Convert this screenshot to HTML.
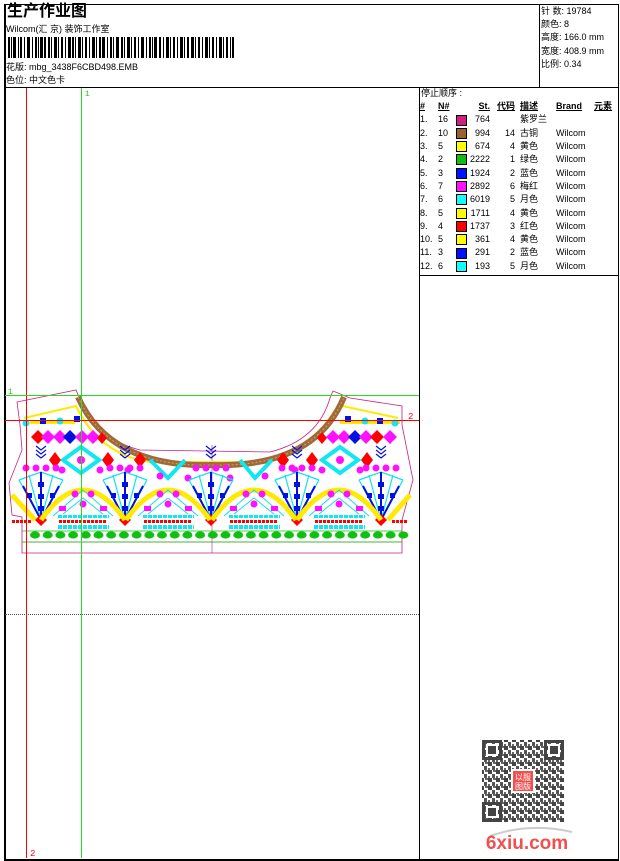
<!DOCTYPE html>
<html><head><meta charset="utf-8"><style>
*{margin:0;padding:0}
body{width:620px;height:860px;background:#fff;position:relative;overflow:hidden;font-family:"Liberation Sans","WenQuanYi Zen Hei","Noto Sans CJK SC",sans-serif;color:#000}
.a{position:absolute;white-space:nowrap}
.s{font-size:9px;line-height:11px}
table{border-collapse:collapse;font-size:9px}
td{height:13.3px;padding:0;line-height:13px;white-space:nowrap}
.sw{display:inline-block;width:9px;height:9px;border:1px solid #000;vertical-align:middle}
</style></head><body>
<!-- frame -->
<div class="a" style="left:4px;top:4px;width:612px;height:854px;border:1px solid #000;border-width:1px 1px 2px 2px"></div>
<div class="a" style="left:4px;top:87px;width:614px;height:1px;background:#000"></div>
<div class="a" style="left:539px;top:4px;width:1px;height:84px;background:#000"></div>
<div class="a" style="left:419px;top:87px;width:1px;height:772px;background:#000"></div>
<div class="a" style="left:419px;top:275px;width:199px;height:1px;background:#000"></div>

<div class="a" style="left:7px;top:3px;font-size:16px;font-weight:bold;line-height:18px">生产作业图</div>
<div class="a s" style="left:6px;top:24px">Wilcom(汇 京) 装饰工作室</div>
<svg class="a" style="left:8px;top:37px" width="226" height="21">
<g fill="#000">
<rect x="0" y="0" width="2" height="21"/><rect x="3" y="0" width="1" height="21"/><rect x="5" y="0" width="3" height="21"/><rect x="10" y="0" width="1" height="21"/><rect x="12" y="0" width="2" height="21"/><rect x="16" y="0" width="1" height="21"/><rect x="19" y="0" width="3" height="21"/><rect x="24" y="0" width="1" height="21"/><rect x="27" y="0" width="2" height="21"/><rect x="30" y="0" width="1" height="21"/><rect x="32" y="0" width="3" height="21"/><rect x="36" y="0" width="2" height="21"/><rect x="40" y="0" width="2" height="21"/><rect x="43" y="0" width="1" height="21"/><rect x="46" y="0" width="3" height="21"/><rect x="50" y="0" width="1" height="21"/><rect x="53" y="0" width="2" height="21"/><rect x="57" y="0" width="1" height="21"/><rect x="60" y="0" width="3" height="21"/><rect x="64" y="0" width="2" height="21"/><rect x="67" y="0" width="1" height="21"/><rect x="70" y="0" width="3" height="21"/><rect x="74" y="0" width="1" height="21"/><rect x="77" y="0" width="2" height="21"/><rect x="81" y="0" width="1" height="21"/><rect x="84" y="0" width="3" height="21"/><rect x="88" y="0" width="1" height="21"/><rect x="91" y="0" width="2" height="21"/><rect x="94" y="0" width="3" height="21"/><rect x="99" y="0" width="1" height="21"/><rect x="102" y="0" width="2" height="21"/><rect x="105" y="0" width="1" height="21"/><rect x="108" y="0" width="3" height="21"/><rect x="113" y="0" width="2" height="21"/><rect x="116" y="0" width="1" height="21"/><rect x="119" y="0" width="3" height="21"/><rect x="123" y="0" width="1" height="21"/><rect x="126" y="0" width="2" height="21"/><rect x="130" y="0" width="1" height="21"/><rect x="133" y="0" width="3" height="21"/><rect x="138" y="0" width="1" height="21"/><rect x="141" y="0" width="2" height="21"/><rect x="144" y="0" width="1" height="21"/><rect x="146" y="0" width="3" height="21"/><rect x="151" y="0" width="2" height="21"/><rect x="155" y="0" width="1" height="21"/><rect x="158" y="0" width="3" height="21"/><rect x="162" y="0" width="1" height="21"/><rect x="165" y="0" width="2" height="21"/><rect x="169" y="0" width="1" height="21"/><rect x="172" y="0" width="3" height="21"/><rect x="176" y="0" width="1" height="21"/><rect x="179" y="0" width="2" height="21"/><rect x="183" y="0" width="3" height="21"/><rect x="187" y="0" width="1" height="21"/><rect x="190" y="0" width="2" height="21"/><rect x="194" y="0" width="1" height="21"/><rect x="197" y="0" width="3" height="21"/><rect x="201" y="0" width="1" height="21"/><rect x="204" y="0" width="2" height="21"/><rect x="208" y="0" width="1" height="21"/><rect x="211" y="0" width="3" height="21"/><rect x="215" y="0" width="1" height="21"/><rect x="218" y="0" width="2" height="21"/><rect x="222" y="0" width="1" height="21"/><rect x="224" y="0" width="2" height="21"/>
</g></svg>
<div class="a s" style="left:6px;top:62px">花版: mbg_3438F6CBD498.EMB</div>
<div class="a s" style="left:6px;top:75px">色位: 中文色卡</div>

<div class="a s" style="left:541px;top:5px;line-height:13.2px">针 数: 19784<br>颜色: 8<br>高度: 166.0 mm<br>宽度: 408.9 mm<br>比例: 0.34</div>

<div class="a s" style="left:421px;top:88px">停止顺序 :</div>
<table class="a" style="left:420px;top:100px">
<tr style="font-weight:bold;text-decoration:underline"><td style="width:18px">#</td><td style="width:18px">N#</td><td style="width:14px"></td><td style="width:20px;text-align:right">St.</td><td style="width:25px;text-align:right">代码</td><td style="width:36px;padding-left:5px">描述</td><td style="width:36px">Brand</td><td style="padding-left:2px">元素</td></tr>
<tr><td>1.</td><td>16</td><td><span class="sw" style="background:#d0207f"></span></td><td style="text-align:right">764</td><td></td><td style="padding-left:5px">紫罗兰</td><td></td><td></td></tr>
<tr><td>2.</td><td>10</td><td><span class="sw" style="background:#9a6030"></span></td><td style="text-align:right">994</td><td style="text-align:right">14</td><td style="padding-left:5px">古铜</td><td>Wilcom</td><td></td></tr>
<tr><td>3.</td><td>5</td><td><span class="sw" style="background:#ffff00"></span></td><td style="text-align:right">674</td><td style="text-align:right">4</td><td style="padding-left:5px">黄色</td><td>Wilcom</td><td></td></tr>
<tr><td>4.</td><td>2</td><td><span class="sw" style="background:#10c010"></span></td><td style="text-align:right">2222</td><td style="text-align:right">1</td><td style="padding-left:5px">绿色</td><td>Wilcom</td><td></td></tr>
<tr><td>5.</td><td>3</td><td><span class="sw" style="background:#0010ff"></span></td><td style="text-align:right">1924</td><td style="text-align:right">2</td><td style="padding-left:5px">蓝色</td><td>Wilcom</td><td></td></tr>
<tr><td>6.</td><td>7</td><td><span class="sw" style="background:#ff10ff"></span></td><td style="text-align:right">2892</td><td style="text-align:right">6</td><td style="padding-left:5px">梅红</td><td>Wilcom</td><td></td></tr>
<tr><td>7.</td><td>6</td><td><span class="sw" style="background:#10ffff"></span></td><td style="text-align:right">6019</td><td style="text-align:right">5</td><td style="padding-left:5px">月色</td><td>Wilcom</td><td></td></tr>
<tr><td>8.</td><td>5</td><td><span class="sw" style="background:#ffff00"></span></td><td style="text-align:right">1711</td><td style="text-align:right">4</td><td style="padding-left:5px">黄色</td><td>Wilcom</td><td></td></tr>
<tr><td>9.</td><td>4</td><td><span class="sw" style="background:#ff0000"></span></td><td style="text-align:right">1737</td><td style="text-align:right">3</td><td style="padding-left:5px">红色</td><td>Wilcom</td><td></td></tr>
<tr><td>10.</td><td>5</td><td><span class="sw" style="background:#ffff00"></span></td><td style="text-align:right">361</td><td style="text-align:right">4</td><td style="padding-left:5px">黄色</td><td>Wilcom</td><td></td></tr>
<tr><td>11.</td><td>3</td><td><span class="sw" style="background:#0010ff"></span></td><td style="text-align:right">291</td><td style="text-align:right">2</td><td style="padding-left:5px">蓝色</td><td>Wilcom</td><td></td></tr>
<tr><td>12.</td><td>6</td><td><span class="sw" style="background:#10ffff"></span></td><td style="text-align:right">193</td><td style="text-align:right">5</td><td style="padding-left:5px">月色</td><td>Wilcom</td><td></td></tr>
</table>

<!-- drawing area -->
<svg class="a" style="left:0;top:0" width="420" height="860">
<defs>
<pattern id="gov" x="29" y="529" width="12.7" height="12" patternUnits="userSpaceOnUse"><ellipse cx="6" cy="6" rx="5" ry="3.6" fill="#10c010"/></pattern>
<pattern id="cyd" x="0" y="0" width="5" height="5" patternUnits="userSpaceOnUse"><rect width="4" height="4" fill="#10e8f0"/></pattern>
<pattern id="rdd" x="0" y="0" width="4" height="4" patternUnits="userSpaceOnUse"><rect width="3" height="3" fill="#f00"/></pattern>
<g id="mot">
 <path d="M0 0 L-22 -40 M0 0 L-12 -45 M0 0 L0 -48 M0 0 L12 -45 M0 0 L22 -40 M-22 -40 L0 -48 L22 -40" stroke="#10e0f0" stroke-width="1.2" fill="none"/>
 <path d="M0 0 L0 -48 M0 0 L-18 -34 M0 0 L18 -34" stroke="#0010e0" stroke-width="2" fill="none"/>
 <g fill="#0010e0"><rect x="-3" y="-14" width="6" height="5"/><rect x="-3" y="-26" width="6" height="5"/><rect x="-3" y="-38" width="6" height="5"/><rect x="-14" y="-27" width="5" height="5"/><rect x="9" y="-27" width="5" height="5"/></g>
 <g fill="#ff10ff"><circle cx="-15" cy="-52" r="3.5"/><circle cx="-5" cy="-52" r="3.5"/><circle cx="5" cy="-52" r="3.5"/><circle cx="15" cy="-52" r="3.5"/></g>
 <path d="M-5 -66 L0 -62 L5 -66 M-5 -70 L0 -66 L5 -70 M-5 -74 L0 -70 L5 -74" stroke="#0010e0" stroke-width="1.2" fill="none"/>
 <polygon points="0,-6 6,0 0,6 -6,0" fill="#f00"/>
</g>
<g id="arch">
 <path d="M-42 0 Q0 -60 42 0" stroke="#ffea00" stroke-width="5" fill="none"/>
 <path d="M-30 -4 L0 -30 L30 -4 M-20 -6 L0 -22 L20 -6" stroke="#10e0f0" stroke-width="1" fill="none"/>
 <g fill="#ff10ff"><circle cx="-8" cy="-26" r="3.5"/><circle cx="8" cy="-26" r="3.5"/><circle cx="0" cy="-16" r="3.5"/><rect x="-24" y="-14" width="7" height="5"/><rect x="17" y="-14" width="7" height="5"/></g>
 <rect x="-26" y="-6" width="52" height="4" fill="url(#cyd)"/>
 <rect x="-26" y="5" width="52" height="4" fill="url(#cyd)"/>
 <rect x="-24" y="0" width="48" height="3" fill="url(#rdd)"/>
</g>
</defs>
<path d="M17 402 L76 390 L82 404 Q100 440 140 450 L270 452 Q318 440 330 398 L333 391 L350 398 L402 406 L402 425 L413 480 L402 520 L402 553 L22 553 L22 517 L12 515 L9 483 L22 450 L20 425 Z" stroke="#c8207f" stroke-width="0.8" fill="none"/>
<path d="M22 542 L402 542 M212 445 L212 553" stroke="#c8207f" stroke-width="0.6" fill="none"/>
<path d="M24 418 L76 406 Q100 455 150 462 L260 462 Q312 452 338 405 L398 418" stroke="#ffea00" stroke-width="2" fill="none"/>
<path d="M78 397 Q110 468 212 465 Q315 468 344 397" stroke="#a06a38" stroke-width="6" fill="none"/>
<path d="M78 397 Q110 468 212 465 Q315 468 344 397" stroke="#d0a070" stroke-width="1" stroke-dasharray="2 2" fill="none"/>
<g fill="#ffea00"><rect x="30" y="420" width="45" height="4"/><rect x="340" y="420" width="60" height="4"/></g>
<g fill="#0010e0"><rect x="40" y="418" width="6" height="6"/><rect x="74" y="416" width="6" height="6"/><rect x="345" y="416" width="6" height="6"/><rect x="377" y="418" width="6" height="6"/></g>
<g fill="#10e8f0"><circle cx="26" cy="423" r="3.5"/><circle cx="60" cy="421" r="3.5"/><circle cx="365" cy="421" r="3.5"/><circle cx="395" cy="423" r="3.5"/></g>
<g>
<polygon points="38,430 45,437 38,444 31,437" fill="#f00"/>
<polygon points="48,430 55,437 48,444 41,437" fill="#ff10ff"/>
<polygon points="60,430 67,437 60,444 53,437" fill="#ff10ff"/>
<polygon points="70,430 77,437 70,444 63,437" fill="#0010e0"/>
<polygon points="82,430 89,437 82,444 75,437" fill="#ff10ff"/>
<polygon points="93,430 100,437 93,444 86,437" fill="#ff10ff"/>
<polygon points="102,432 107,438 102,444 97,438" fill="#f00"/>
<polygon points="322,432 327,438 322,444 317,438" fill="#f00"/>
<polygon points="333,430 340,437 333,444 326,437" fill="#ff10ff"/>
<polygon points="344,430 351,437 344,444 337,437" fill="#ff10ff"/>
<polygon points="355,430 362,437 355,444 348,437" fill="#0010e0"/>
<polygon points="366,430 373,437 366,444 359,437" fill="#ff10ff"/>
<polygon points="377,430 384,437 377,444 370,437" fill="#f00"/>
<polygon points="390,430 397,437 390,444 383,437" fill="#ff10ff"/>
</g>
<g stroke="#10e8f0" stroke-width="4" fill="none">
<polygon points="81,447 99,460 81,473 63,460"/>
<polygon points="340,447 358,460 340,473 322,460"/>
<path d="M150 460 L168 478 L185 460 M240 460 L255 478 L272 460"/>
</g>
<g fill="#ff10ff"><circle cx="81" cy="460" r="4"/><circle cx="340" cy="460" r="4"/></g>
<g fill="#f00"><polygon points="55,452 61,460 55,468 49,460"/><polygon points="108,452 114,460 108,468 102,460"/><polygon points="140,452 146,460 140,468 134,460"/><polygon points="283,452 289,460 283,468 277,460"/><polygon points="312,452 318,460 312,468 306,460"/><polygon points="367,452 373,460 367,468 361,460"/></g>
<g fill="#ff10ff"><circle cx="62" cy="470" r="3.5"/><circle cx="100" cy="470" r="3.5"/><circle cx="128" cy="470" r="3.5"/><circle cx="160" cy="476" r="3.5"/><circle cx="188" cy="478" r="3.5"/><circle cx="230" cy="478" r="3.5"/><circle cx="265" cy="476" r="3.5"/><circle cx="295" cy="470" r="3.5"/><circle cx="322" cy="470" r="3.5"/><circle cx="360" cy="470" r="3.5"/></g>
<use href="#mot" x="41" y="520"/>
<use href="#mot" x="125" y="520"/>
<use href="#mot" x="211" y="520"/>
<use href="#mot" x="297" y="520"/>
<use href="#mot" x="381" y="520"/>
<use href="#arch" x="83" y="520"/>
<use href="#arch" x="168" y="520"/>
<use href="#arch" x="254" y="520"/>
<use href="#arch" x="339" y="520"/>
<path d="M12 495 L35 520 M388 520 L410 495" stroke="#ffea00" stroke-width="5" fill="none"/>
<rect x="12" y="520" width="20" height="3" fill="url(#rdd)"/>
<rect x="392" y="520" width="16" height="3" fill="url(#rdd)"/>
<path d="M22 531 L402 531 M22 542 L402 542" stroke="#10c010" stroke-width="0.8"/>
<rect x="29" y="529" width="381" height="12" fill="url(#gov)"/>
<text x="85" y="96" font-size="8" fill="#22cc22" font-family="Liberation Mono,monospace">1</text>
<text x="8" y="394" font-size="8" fill="#22cc22" font-family="Liberation Mono,monospace">1</text>
<text x="408" y="419" font-size="9" fill="#f00" font-family="Liberation Mono,monospace">2</text>
<text x="30" y="856" font-size="9" fill="#f00" font-family="Liberation Mono,monospace">2</text>
</svg>
<!-- guide lines -->
<div class="a" style="left:26px;top:88px;width:1px;height:770px;background:#f00"></div>
<div class="a" style="left:81px;top:88px;width:1px;height:770px;background:#22dd22"></div>
<div class="a" style="left:5px;top:395px;width:414px;height:1px;background:#22dd22"></div>
<div class="a" style="left:5px;top:420px;width:414px;height:1px;background:#f00"></div>
<div class="a" style="left:5px;top:614px;width:414px;height:0;border-top:1px dotted #555"></div>

<!-- QR -->
<svg class="a" style="left:480px;top:738px" width="96" height="116">
<defs><pattern id="qr" width="8" height="8" patternUnits="userSpaceOnUse"><rect width="4" height="4" fill="#444"/><rect x="4" y="4" width="3" height="4" fill="#555"/><rect x="5" y="0" width="3" height="2" fill="#666"/><rect x="0" y="6" width="2" height="2" fill="#666"/></pattern></defs>
<rect x="2" y="2" width="82" height="82" fill="url(#qr)"/>
<g fill="none" stroke="#444" stroke-width="3">
<rect x="3.5" y="3.5" width="17" height="17"/><rect x="65.5" y="3.5" width="17" height="17"/><rect x="3.5" y="65.5" width="17" height="17"/></g>
<g fill="#fff"><rect x="6" y="6" width="12" height="12"/><rect x="68" y="6" width="12" height="12"/><rect x="6" y="68" width="12" height="12"/></g>
<g fill="#444"><rect x="8" y="8" width="8" height="8"/><rect x="70" y="8" width="8" height="8"/><rect x="8" y="70" width="8" height="8"/></g>
<rect x="31" y="31" width="24" height="24" fill="#fff"/>
<rect x="33" y="33" width="20" height="20" fill="#f05050"/>
<text x="43" y="42" font-size="8" fill="#fff" text-anchor="middle" font-family="WenQuanYi Zen Hei,sans-serif">以服</text>
<text x="43" y="51" font-size="8" fill="#fff" text-anchor="middle" font-family="WenQuanYi Zen Hei,sans-serif">图版</text>
<path d="M10 98 Q50 84 92 94" stroke="#ccc" stroke-width="2" fill="none"/>
<text x="47" y="111" font-size="19" font-weight="bold" fill="#f05050" text-anchor="middle" font-family="Liberation Sans,sans-serif">6xiu.com</text>
</svg>
</body></html>
